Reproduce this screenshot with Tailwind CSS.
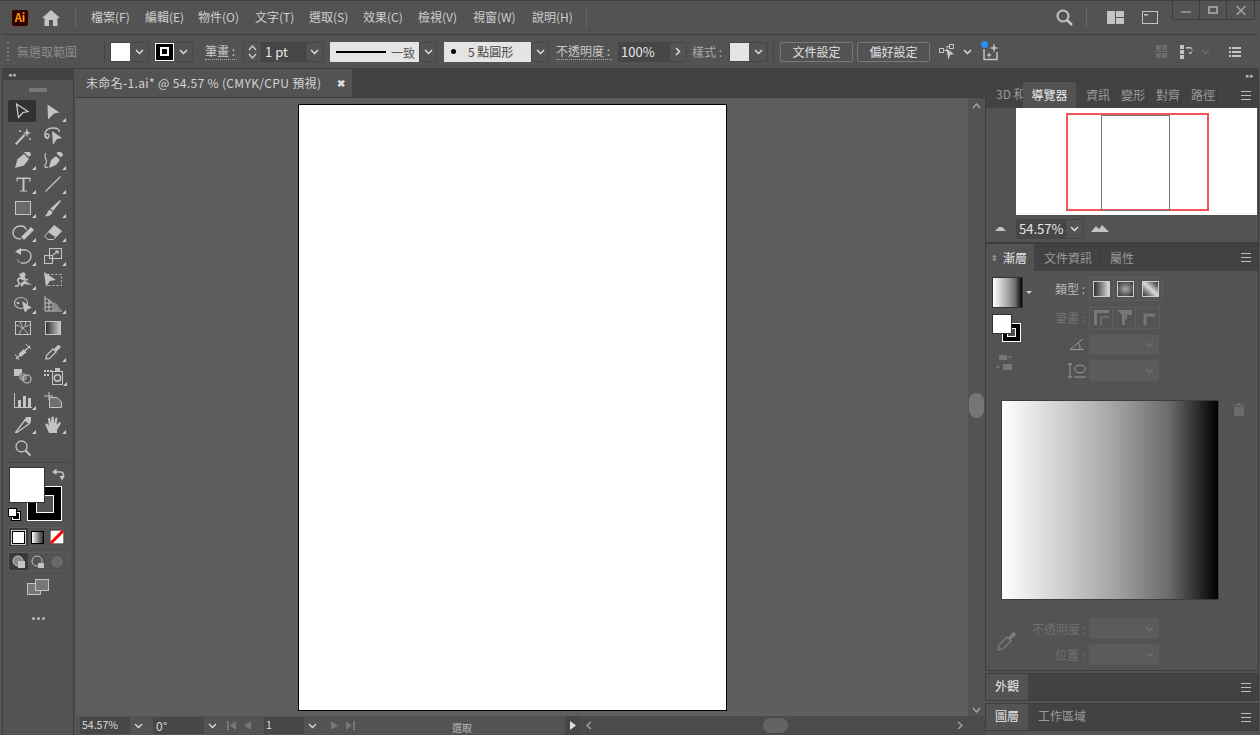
<!DOCTYPE html>
<html>
  <head>
    <meta charset="UTF-8" />
    <meta name="viewport" content="width=device-width, initial-scale=1.0" />
    <script src="https://cdn.jsdelivr.net/npm/@tailwindcss/browser@4"></script>
  </head>
  <body class="w-[1260px] h-[735px] overflow-hidden bg-[#535353] text-[12px] leading-none text-[#c8c8c8] font-['Noto_Sans_CJK_TC','Liberation_Sans',sans-serif]">
    <!-- title bar -->
    <div class="relative h-[34px] flex items-center border-t border-[#3f3f3f]">
      <div class="ml-[12px] w-[16px] h-[16px] rounded-[2px] bg-[#330000] text-[#ff9a00] text-[11px] font-bold flex items-center justify-center">Ai</div>
      <svg class="ml-[14px] w-[18px] h-[16px]" viewBox="0 0 18 16"><path fill="#c4c4c4" d="M9 0 L18 8 L15.5 8 L15.5 16 L11 16 L11 10 L7 10 L7 16 L2.500 16 L2.500 8 L0 8 Z"/></svg>
      <div class="ml-[15px] w-[1px] h-[20px] bg-[#666]"></div>
      <div class="ml-[15px] mb-[2px] flex items-center text-[#cfcfcf]">
        <span class="w-[54px]">檔案(F)</span>
        <span class="w-[53px]">編輯(E)</span>
        <span class="w-[57px]">物件(O)</span>
        <span class="w-[54px]">文字(T)</span>
        <span class="w-[54px]">選取(S)</span>
        <span class="w-[55px]">效果(C)</span>
        <span class="w-[55px]">檢視(V)</span>
        <span class="w-[59px]">視窗(W)</span>
        <span class="w-[54px]">說明(H)</span>
      </div>
      <div class="w-[1px] h-[20px] bg-[#666]"></div>
      <svg class="ml-[469px] w-[17px] h-[17px]" viewBox="0 0 17 17" fill="none" stroke="#c4c4c4" stroke-width="2"><circle cx="7" cy="7" r="5.500"/><path d="M11 11 L16 16" stroke-width="2.500"/></svg>
      <div class="ml-[13px] w-[1px] h-[20px] bg-[#666]"></div>
      <svg class="ml-[20px] w-[17px] h-[13px]" viewBox="0 0 17 13" fill="#c4c4c4"><rect width="8" height="13"/><rect x="9" width="8" height="6"/><rect x="9" y="7" width="8" height="6"/></svg>
      <svg class="ml-[18px] w-[16px] h-[13px]" viewBox="0 0 16 13" fill="none" stroke="#c4c4c4"><rect x="0.500" y="0.500" width="15" height="12"/><rect x="2" y="3" width="4" height="1.500" fill="#c4c4c4" stroke="none"/></svg>
      <!-- window buttons -->
      <div class="absolute left-[1172px] top-0 w-[83px] h-[19px] flex border border-t-0 border-[#3d3d3d] rounded-b-[2px]">
        <div class="w-[27px] flex items-center justify-center border-r border-[#3d3d3d]"><div class="w-[10px] h-[2px] mt-[3px] bg-[#8c8c8c]"></div></div>
        <div class="w-[27px] flex items-center justify-center border-r border-[#3d3d3d]"><div class="w-[10px] h-[8px] border-2 border-[#9a9a9a]"></div></div>
        <div class="flex-1 flex items-center justify-center">
          <svg class="w-[10px] h-[9px]" viewBox="0 0 10 9" stroke="#9a9a9a" stroke-width="1.800"><path d="M0.500 0 L9.500 9 M9.500 0 L0.500 9"/></svg>
        </div>
      </div>
    </div>

    <!-- control bar -->
    <div class="h-[35px] flex items-center border-y border-[#3d3d3d] ml-[2px] mr-[2px] text-[#c8c8c8]">
      <div class="ml-[5px] w-[2px] h-[19px] border-l-2 border-dotted border-[#777]"></div>
      <span class="ml-[8px] w-[87px] text-[#8b8b8b]">無選取範圍</span>
      <div class="w-[1px] h-[20px] bg-[#464646]"></div>
      <div class="ml-[5px] flex h-[20px] border border-[#464646] rounded-[2px]">
        <div class="w-[19px] bg-white"></div>
        <div class="w-[18px] flex items-center justify-center"><svg class="w-[9px] h-[6px]" viewBox="0 0 9 6" fill="none" stroke="#ddd" stroke-width="1.500"><path d="M1 1 L4.500 4.500 L8 1"/></svg></div>
      </div>
      <div class="ml-[5px] flex h-[20px] border border-[#464646] rounded-[2px]">
        <div class="w-[19px] bg-black border border-white flex items-center justify-center"><div class="w-[9px] h-[9px] border-2 border-white bg-black"></div></div>
        <div class="w-[18px] flex items-center justify-center"><svg class="w-[9px] h-[6px]" viewBox="0 0 9 6" fill="none" stroke="#ddd" stroke-width="1.500"><path d="M1 1 L4.500 4.500 L8 1"/></svg></div>
      </div>
      <span class="ml-[12px] w-[32px] h-[17px] pt-[2px] border-b border-dotted border-[#aaa] whitespace-nowrap">筆畫 :</span>
      <div class="ml-[6px] flex h-[20px] w-[81px] border border-[#464646] rounded-[2px]">
        <div class="w-[17px] flex flex-col items-center justify-center gap-[2px]">
          <svg class="w-[9px] h-[6px]" viewBox="0 0 9 6" fill="none" stroke="#ccc" stroke-width="1.300"><path d="M1 5 L4.500 1 L8 5"/></svg>
          <svg class="w-[9px] h-[6px]" viewBox="0 0 9 6" fill="none" stroke="#ccc" stroke-width="1.300"><path d="M1 1 L4.500 5 L8 1"/></svg>
        </div>
        <div class="w-[45px] bg-[#464646] border-x border-[#3f3f3f] pl-[3px] flex items-center text-[#e6e6e6] text-[13px]">1 pt</div>
        <div class="flex-1 flex items-center justify-center"><svg class="w-[9px] h-[6px]" viewBox="0 0 9 6" fill="none" stroke="#ddd" stroke-width="1.500"><path d="M1 1 L4.500 4.500 L8 1"/></svg></div>
      </div>
      <div class="ml-[6px] flex h-[20px]">
        <div class="w-[89px] bg-[#e4e4e4] flex items-center pl-[6px] text-[#555]">
          <div class="w-[50px] h-[2px] bg-black"></div><span class="ml-[5px] pt-[2px] whitespace-nowrap">一致</span>
        </div>
        <div class="w-[18px] border border-[#464646] rounded-r-[2px] flex items-center justify-center"><svg class="w-[9px] h-[6px]" viewBox="0 0 9 6" fill="none" stroke="#ddd" stroke-width="1.500"><path d="M1 1 L4.500 4.500 L8 1"/></svg></div>
      </div>
      <div class="ml-[7px] flex h-[20px]">
        <div class="w-[87px] bg-[#e4e4e4] flex items-center pl-[7px] text-[#333]">
          <div class="w-[5px] h-[5px] rounded-full bg-black"></div><span class="ml-[12px] text-[#444]">5 點圓形</span>
        </div>
        <div class="w-[18px] border border-[#464646] rounded-r-[2px] flex items-center justify-center"><svg class="w-[9px] h-[6px]" viewBox="0 0 9 6" fill="none" stroke="#ddd" stroke-width="1.500"><path d="M1 1 L4.500 4.500 L8 1"/></svg></div>
      </div>
      <span class="ml-[7px] w-[56px] h-[17px] pt-[2px] border-b border-dotted border-[#aaa] whitespace-nowrap">不透明度 :</span>
      <div class="ml-[6px] flex h-[20px] w-[69px] border border-[#464646] rounded-[2px]">
        <div class="w-[51px] bg-[#464646] pl-[2px] flex items-center text-[#e6e6e6] text-[13px]">100%</div>
        <div class="flex-1 flex items-center justify-center"><svg class="w-[6px] h-[9px]" viewBox="0 0 6 9" fill="none" stroke="#ddd" stroke-width="1.500"><path d="M1 1 L4.500 4.500 L1 8"/></svg></div>
      </div>
      <span class="ml-[5px] w-[37px] text-[#a8a8a8] whitespace-nowrap">樣式 :</span>
      <div class="flex h-[20px] border border-[#464646] rounded-[2px]">
        <div class="w-[19px] bg-[#e4e4e4]"></div>
        <div class="w-[18px] flex items-center justify-center"><svg class="w-[9px] h-[6px]" viewBox="0 0 9 6" fill="none" stroke="#ddd" stroke-width="1.500"><path d="M1 1 L4.500 4.500 L8 1"/></svg></div>
      </div>
      <div class="ml-[5px] w-[1px] h-[20px] bg-[#464646]"></div>
      <div class="ml-[6px] w-[73px] h-[20px] border border-[#777] rounded-[2px] flex items-center justify-center text-[#e0e0e0]">文件設定</div>
      <div class="ml-[4px] w-[73px] h-[20px] border border-[#777] rounded-[2px] flex items-center justify-center text-[#e0e0e0]">偏好設定</div>
      <svg class="ml-[9px] w-[17px] h-[18px]" viewBox="0 0 17 18" fill="none" stroke="#c4c4c4"><rect x="0.500" y="5.500" width="4" height="4"/><rect x="10.500" y="1.500" width="4" height="4"/><path d="M4.500 7.500 H8 M8 3.500 H10.500 M8 3.500 V5" /><path fill="#c4c4c4" stroke="none" d="M7 5 L15 11 L11 12 L9.500 17 Z"/></svg>
      <svg class="ml-[7px] w-[9px] h-[6px]" viewBox="0 0 9 6" fill="none" stroke="#ddd" stroke-width="1.500"><path d="M1 1 L4.500 4.500 L8 1"/></svg>
      <div class="relative ml-[10px] w-[17px] h-[19px]">
        <svg class="w-[17px] h-[19px]" viewBox="0 0 17 19" fill="none" stroke="#c4c4c4" stroke-width="1.500"><path d="M2 7 V17.500 H15 V10"/><path fill="#c4c4c4" stroke="none" d="M12 1 L13 5 L17 6 L13 7 L12 11 L11 7 L7 6 L11 5 Z M7 10 L7.700 12.300 L10 13 L7.700 13.700 L7 16 L6.300 13.700 L4 13 L6.300 12.300 Z"/></svg>
        <div class="absolute left-[-1px] top-[-1px] w-[7px] h-[7px] rounded-full bg-[#2c8df4]"></div>
      </div>
      <svg class="ml-[155px] w-[15px] h-[13px]" viewBox="0 0 15 13" fill="#6c6c6c"><rect x="2" y="0" width="5" height="5"/><rect x="8" y="0" width="5" height="5"/><rect x="2" y="8" width="5" height="5"/><rect x="8" y="8" width="5" height="5"/><rect x="0" y="6" width="15" height="1"/></svg>
      <svg class="ml-[11px] w-[15px] h-[14px]" viewBox="0 0 15 14" fill="#c4c4c4"><rect x="0" y="0" width="4" height="4"/><rect x="0" y="5" width="4" height="4"/><rect x="0" y="10" width="4" height="4"/><path d="M6 2 H11 A5 5 0 0 1 11 9 H9 V7.500 H11 A2.500 2.500 0 0 0 11 3.500 H6 Z"/></svg>
      <svg class="ml-[6px] w-[9px] h-[6px]" viewBox="0 0 9 6" fill="none" stroke="#6c6c6c" stroke-width="1.500"><path d="M1 1 L4.500 4.500 L8 1"/></svg>
      <svg class="ml-[19px] w-[12px] h-[10px]" viewBox="0 0 12 10" fill="#c4c4c4"><rect width="2" height="2"/><rect x="3" width="9" height="2"/><rect y="4" width="2" height="2"/><rect x="3" y="4" width="9" height="2"/><rect y="8" width="2" height="2"/><rect x="3" y="8" width="9" height="2"/></svg>
    </div>

    <div class="flex h-[666px]">
      <!-- tool panel -->
      <div class="w-[76px] shrink-0 px-[2px] flex flex-col">
        <div class="h-[11px] bg-[#424242] text-[#bbb] text-[7px] pl-[6px] flex items-center">◂◂</div>
        <div class="flex-1 bg-[#535353] border-x border-[#3d3d3d] flex flex-col">
          <div class="h-[20px] flex items-center justify-center"><div class="w-[18px] h-[4px] bg-[#777]"></div></div>
          <div class="ml-[5px] grid grid-cols-[30px_30px] auto-rows-[24px] text-[#c4c4c4]">
            <!-- selection -->
            <div class="flex items-center justify-center bg-[#323232] rounded-[2px] h-[22px] w-[28px]">
              <svg class="w-[14px] h-[16px]" viewBox="0 0 14 16" fill="none" stroke="#d4d4d4" stroke-width="1.200"><path d="M1.500 1 L13 8.500 L8 9.500 L3.500 14.500 Z"/></svg>
            </div>
            <div class="relative flex items-center justify-center">
              <svg class="w-[14px] h-[16px]" viewBox="0 0 14 16" fill="#c4c4c4"><path d="M1.500 0.500 L13.500 8.500 L8 9.500 L2 15.500 Z"/></svg>
              <div class="absolute right-[2px] bottom-[2px] w-0 h-0 border-2 border-l-transparent border-t-transparent border-r-[#ccc] border-b-[#ccc]"></div>
            </div>
            <!-- wand / lasso -->
            <div class="flex items-center justify-center">
              <svg class="w-[16px] h-[17px]" viewBox="0 0 16 17" fill="#c4c4c4"><path d="M0 15.500 L9 6 L10.500 7.500 L1.500 17 Z"/><path d="M11 4 L12 0 L13 4 L16 5 L13 6 L12 9 L11 6 L8 5 Z"/><circle cx="5" cy="3" r="1"/><circle cx="15" cy="11" r="1"/></svg>
            </div>
            <div class="relative flex items-center justify-center">
              <svg class="w-[20px] h-[18px]" viewBox="0 0 20 18" fill="none" stroke="#c4c4c4" stroke-width="1.300"><path d="M5 12 C-1 7 3 1 10 1 C15 1 17 3 16 5"/><circle cx="4" cy="9" r="2"/><path fill="#c4c4c4" stroke="none" d="M9 4 L19 11 L14 12 L10 18 Z"/></svg>
            </div>
            <!-- pen / curvature -->
            <div class="relative flex items-center justify-center">
              <svg class="w-[16px] h-[16px]" viewBox="0 0 16 16" fill="#c4c4c4"><path d="M0 16 L2.500 7 L9 2 L14 7 L9 13.500 Z"/><rect x="9" y="-1.500" width="7" height="4" transform="rotate(45 12 1)"/></svg>
              <div class="absolute right-[2px] bottom-[2px] w-0 h-0 border-2 border-l-transparent border-t-transparent border-r-[#ccc] border-b-[#ccc]"></div>
            </div>
            <div class="relative flex items-center justify-center">
              <svg class="w-[20px] h-[17px]" viewBox="0 0 20 17" fill="#c4c4c4"><path d="M6 16 L8 8 L13 4 L17 8 L13 13 Z"/><rect x="14" y="0" width="6" height="4" transform="rotate(45 17 2)"/><path fill="none" stroke="#c4c4c4" stroke-width="1.200" d="M3 1 C-1 6 7 8 2 13 C1 15 3 16 5 15"/></svg>
              <div class="absolute right-[2px] bottom-[2px] w-0 h-0 border-2 border-l-transparent border-t-transparent border-r-[#ccc] border-b-[#ccc]"></div>
            </div>
            <!-- type / line -->
            <div class="relative flex items-center justify-center">
              <svg class="w-[15px] h-[15px]" viewBox="0 0 15 15" fill="#c4c4c4"><path d="M0.500 0.500 H14.500 V4.500 H13.300 V2 H8.500 V13.500 H11 V14.500 H4 V13.500 H6.500 V2 H1.700 V4.500 H0.500 Z"/></svg>
              <div class="absolute right-[2px] bottom-[2px] w-0 h-0 border-2 border-l-transparent border-t-transparent border-r-[#ccc] border-b-[#ccc]"></div>
            </div>
            <div class="relative flex items-center justify-center">
              <svg class="w-[16px] h-[16px]" viewBox="0 0 16 16" stroke="#c4c4c4" stroke-width="1.200"><path d="M0.500 15.500 L15.500 0.500"/></svg>
              <div class="absolute right-[2px] bottom-[2px] w-0 h-0 border-2 border-l-transparent border-t-transparent border-r-[#ccc] border-b-[#ccc]"></div>
            </div>
            <!-- rect / brush -->
            <div class="relative flex items-center justify-center">
              <div class="w-[16px] h-[14px] border border-[#c4c4c4] bg-[#6a6a6a]"></div>
              <div class="absolute right-[2px] bottom-[2px] w-0 h-0 border-2 border-l-transparent border-t-transparent border-r-[#ccc] border-b-[#ccc]"></div>
            </div>
            <div class="relative flex items-center justify-center">
              <svg class="w-[16px] h-[17px]" viewBox="0 0 16 17" fill="#c4c4c4"><path d="M15 0 L16 1 L8 11 L5.500 8.500 Z"/><path d="M5 9.500 L7.500 12 C7 15 3 17 0 16 C2.500 14.500 2 11 5 9.500 Z"/></svg>
              <div class="absolute right-[2px] bottom-[2px] w-0 h-0 border-2 border-l-transparent border-t-transparent border-r-[#ccc] border-b-[#ccc]"></div>
            </div>
            <!-- shaper / eraser -->
            <div class="relative flex items-center justify-center">
              <svg class="w-[22px] h-[15px]" viewBox="0 0 22 15" fill="none" stroke="#c4c4c4" stroke-width="1.400"><path d="M9 14 C-3 14 0 1 8 1 C12 1 14 3 14 5"/><path d="M9 12 L19 2 L22 5 L12 15 Z" fill="#c4c4c4" stroke="none"/></svg>
              <div class="absolute right-[2px] bottom-[2px] w-0 h-0 border-2 border-l-transparent border-t-transparent border-r-[#ccc] border-b-[#ccc]"></div>
            </div>
            <div class="relative flex items-center justify-center">
              <svg class="w-[18px] h-[15px]" viewBox="0 0 18 15" stroke="#c4c4c4"><path fill="#c4c4c4" d="M10 0.500 L17.500 6 L12 12 L4.500 7 Z"/><path fill="#535353" d="M4.500 7 L12 12 L9.500 14.500 L4 14.500 L0.500 11.500 Z"/></svg>
              <div class="absolute right-[2px] bottom-[2px] w-0 h-0 border-2 border-l-transparent border-t-transparent border-r-[#ccc] border-b-[#ccc]"></div>
            </div>
            <!-- rotate / scale -->
            <div class="relative flex items-center justify-center">
              <svg class="w-[17px] h-[16px]" viewBox="0 0 17 16" fill="none" stroke="#c4c4c4" stroke-width="1.300"><path d="M4 3 C10 0 16 3 16 8 C16 13 11 16 7 15" /><path d="M7 15 C5 15 3 13 2 11" stroke-dasharray="1.500 1.500"/><path fill="#c4c4c4" stroke="none" d="M0 3.500 L6 0 L6 7 Z"/></svg>
              <div class="absolute right-[2px] bottom-[2px] w-0 h-0 border-2 border-l-transparent border-t-transparent border-r-[#ccc] border-b-[#ccc]"></div>
            </div>
            <div class="relative flex items-center justify-center">
              <svg class="w-[18px] h-[16px]" viewBox="0 0 18 16" fill="none" stroke="#c4c4c4" stroke-width="1.100"><rect x="0.500" y="7.500" width="8" height="8"/><rect x="5.500" y="0.500" width="12" height="10"/><path d="M9 7 L14 3 M11 3 H14 V6"/></svg>
              <div class="absolute right-[2px] bottom-[2px] w-0 h-0 border-2 border-l-transparent border-t-transparent border-r-[#ccc] border-b-[#ccc]"></div>
            </div>
            <!-- width / free transform -->
            <div class="relative flex items-center justify-center">
              <svg class="w-[19px] h-[16px]" viewBox="0 0 19 16" fill="none" stroke="#c4c4c4" stroke-width="1.500"><path d="M1 14 C5 15 6 11 4 9 C3 7 6 5 8 7 C10 9 12 5 8 3"/><path fill="#c4c4c4" stroke="none" d="M5 2 L10 0 L12 3 L9 5 L15 8 L11 9 L18 13 L10 12 L8 15 L6 12 L11 8 L7 6 Z"/></svg>
              <div class="absolute right-[2px] bottom-[2px] w-0 h-0 border-2 border-l-transparent border-t-transparent border-r-[#ccc] border-b-[#ccc]"></div>
            </div>
            <div class="relative flex items-center justify-center">
              <svg class="w-[19px] h-[16px]" viewBox="0 0 19 16" fill="none" stroke="#c4c4c4"><rect x="3.500" y="2.500" width="14" height="11" stroke-dasharray="2 2"/><path fill="#c4c4c4" stroke="none" d="M0 0 L12 8 L6 9 L2 15 Z"/></svg>
            </div>
            <!-- shape builder / perspective -->
            <div class="relative flex items-center justify-center">
              <svg class="w-[19px] h-[16px]" viewBox="0 0 19 16" fill="none" stroke="#c4c4c4" stroke-width="1.100"><ellipse cx="7" cy="7" rx="6.500" ry="5.500"/><path fill="#c4c4c4" stroke="none" d="M8 5 L18 12 L14 13 L11 17 Z"/><circle cx="4" cy="7" r="0.800" fill="#c4c4c4"/></svg>
              <div class="absolute right-[2px] bottom-[2px] w-0 h-0 border-2 border-l-transparent border-t-transparent border-r-[#ccc] border-b-[#ccc]"></div>
            </div>
            <div class="relative flex items-center justify-center">
              <svg class="w-[19px] h-[16px]" viewBox="0 0 19 16" fill="none" stroke="#c4c4c4"><path d="M1 0 V15 H18 M1 2 L9 7 L12 10 M1 7 H9 M1 11 H14 M5 3 V15 M9 7 V15"/><path fill="#8a8a8a" stroke="none" d="M8 7 L12 7 L17 14 H8 Z"/></svg>
              <div class="absolute right-[2px] bottom-[2px] w-0 h-0 border-2 border-l-transparent border-t-transparent border-r-[#ccc] border-b-[#ccc]"></div>
            </div>
            <!-- mesh / gradient -->
            <div class="flex items-center justify-center">
              <svg class="w-[16px] h-[14px]" viewBox="0 0 16 14" fill="none" stroke="#c4c4c4"><rect x="0.500" y="0.500" width="15" height="13"/><path stroke-width="0.900" d="M0 5 C5 3 6 8 8 7 C10 5 12 6 16 3 M8 7 C9 9 12 10 13 14 M8 7 C6 9 5 11 4 14 M5 0 C6 3 7 5 8 7 M11 0 L10 5"/></svg>
            </div>
            <div class="flex items-center justify-center">
              <div class="w-[16px] h-[14px] border border-[#c4c4c4] bg-linear-to-r from-[#333] to-[#ccc]"></div>
            </div>
            <!-- blend / eyedropper -->
            <div class="flex items-center justify-center">
              <svg class="w-[16px] h-[16px]" viewBox="0 0 16 16" fill="#c4c4c4" stroke="#c4c4c4"><path stroke-width="1.500" d="M1 15 L15 2"/><rect x="4" y="7" width="7" height="4" transform="rotate(-42 7.500 9)" stroke="none"/><path stroke-width="1" d="M0 10 L4 16 M11 0 L16 5"/></svg>
            </div>
            <div class="relative flex items-center justify-center">
              <svg class="w-[16px] h-[16px]" viewBox="0 0 16 16" fill="none" stroke="#c4c4c4" stroke-width="1.300"><path d="M1 15 L1.500 11.500 L8 5 L11 8 L4.500 14.500 Z"/><path fill="#c4c4c4" stroke="none" d="M7 3 L9 5 L13 1 A2 2 0 0 1 15.500 3.500 L11.500 7.500 L13.500 9.500 Z"/></svg>
              <div class="absolute right-[2px] bottom-[2px] w-0 h-0 border-2 border-l-transparent border-t-transparent border-r-[#ccc] border-b-[#ccc]"></div>
            </div>
            <!-- symbol sprayer -->
            <div class="flex items-center justify-center">
              <svg class="w-[18px] h-[15px]" viewBox="0 0 18 15" fill="none" stroke="#c4c4c4" stroke-width="1.100"><rect width="8" height="7" fill="#c4c4c4" stroke="none"/><circle cx="9" cy="8" r="4" fill="#8a8a8a" stroke="none"/><circle cx="13" cy="10" r="4"/></svg>
            </div>
            <div class="relative flex items-center justify-center">
              <svg class="w-[19px] h-[17px]" viewBox="0 0 19 17" fill="#c4c4c4"><rect x="0" y="2" width="2" height="2"/><rect x="3" y="2" width="2" height="2"/><rect x="6" y="2" width="2" height="2"/><rect x="0" y="6" width="2" height="2"/><rect x="3" y="6" width="2" height="2"/><rect x="11" y="0" width="5" height="3"/><rect x="8.500" y="3.500" width="10" height="13" fill="none" stroke="#c4c4c4"/><circle cx="13.500" cy="10" r="3.200" fill="none" stroke="#c4c4c4" stroke-width="1.500"/></svg>
              <div class="absolute right-[1px] bottom-[2px] w-0 h-0 border-2 border-l-transparent border-t-transparent border-r-[#ccc] border-b-[#ccc]"></div>
            </div>
            <!-- graph / artboard -->
            <div class="relative flex items-center justify-center">
              <svg class="w-[18px] h-[15px]" viewBox="0 0 18 15" fill="#c4c4c4"><rect x="0" y="0" width="1" height="15"/><rect x="0" y="14" width="18" height="1"/><rect x="4" y="7" width="3" height="7"/><rect x="9" y="3" width="3" height="11"/><rect x="14" y="5" width="3" height="9"/></svg>
              <div class="absolute right-[2px] bottom-[2px] w-0 h-0 border-2 border-l-transparent border-t-transparent border-r-[#ccc] border-b-[#ccc]"></div>
            </div>
            <div class="flex items-center justify-center">
              <svg class="w-[18px] h-[16px]" viewBox="0 0 18 16" fill="none" stroke="#c4c4c4"><path d="M5 0 V8 M0 4 H9"/><path fill="#707070" d="M5.500 5.500 H13 L17.500 10 V15.500 H5.500 Z"/></svg>
            </div>
            <!-- slice / hand -->
            <div class="relative flex items-center justify-center">
              <svg class="w-[17px] h-[17px]" viewBox="0 0 17 17" fill="none" stroke="#c4c4c4" stroke-width="1.300"><path d="M0.500 16.500 L10 4 L14.500 7.500 L2 16.500 Z"/><path fill="#c4c4c4" stroke="none" d="M11 1 L16 1 L16 6 L14 7.500 L9.500 4 Z"/></svg>
              <div class="absolute right-[2px] bottom-[2px] w-0 h-0 border-2 border-l-transparent border-t-transparent border-r-[#ccc] border-b-[#ccc]"></div>
            </div>
            <div class="relative flex items-center justify-center">
              <svg class="w-[17px] h-[17px]" viewBox="0 0 17 17" fill="#c4c4c4"><path d="M4 17 L0.500 9 C0 7.500 2 7 3 8.500 L4 10 L3 3 C3 1.500 5 1.500 5.300 3 L6 7.500 L6.500 1.500 C6.700 0 8.700 0 8.800 1.500 L9 7.500 L10.300 2.500 C10.700 1 12.500 1.500 12.300 3 L11.500 9 L14 6.500 C15 5.500 16.500 6.500 15.500 8 L12 14 V17 Z"/></svg>
              <div class="absolute right-[2px] bottom-[2px] w-0 h-0 border-2 border-l-transparent border-t-transparent border-r-[#ccc] border-b-[#ccc]"></div>
            </div>
            <!-- zoom -->
            <div class="flex items-center justify-center">
              <svg class="w-[16px] h-[16px]" viewBox="0 0 16 16" fill="none" stroke="#c4c4c4" stroke-width="1.300"><circle cx="6.500" cy="6.500" r="5.500"/><path d="M10.500 10.500 L15.500 15.500" stroke-width="2"/></svg>
            </div>
          </div>

          <div class="mt-[2px] mx-[3px] h-[1px] bg-[#464646]"></div>
          <!-- fill and stroke -->
          <div class="relative h-[64px] mx-[5px]">
            <div class="absolute left-[19px] top-[23px] w-[35px] h-[35px] bg-black border border-white flex items-center justify-center"><div class="w-[18px] h-[18px] bg-[#535353] border border-white"></div></div>
            <div class="absolute left-[1px] top-[4px] w-[36px] h-[36px] bg-white border border-[#333]"></div>
            <svg class="absolute left-[44px] top-[5px] w-[13px] h-[13px]" viewBox="0 0 13 13" fill="none" stroke="#c4c4c4" stroke-width="1.500"><path d="M2 4 H9 C11 4 12 6 11 8"/><path fill="#c4c4c4" stroke="none" d="M4.500 0.500 V7 L0 4 Z M7.500 8 H13 L10 12.500 Z"/></svg>
            <div class="absolute left-[4px] top-[49px] w-[8px] h-[8px] bg-black border border-white outline outline-black"></div>
            <div class="absolute left-0 top-[45px] w-[9px] h-[9px] bg-white border border-black"></div>
          </div>
          <!-- color modes -->
          <div class="mx-[5px] h-[20px] flex border border-[#5c5c5c] rounded-[1px]">
            <div class="w-[20px] bg-[#3a3a3a] flex items-center justify-center"><div class="w-[13px] h-[13px] bg-white border border-black outline outline-[#ccc]"></div></div>
            <div class="w-[20px] flex items-center justify-center"><div class="w-[13px] h-[13px] bg-linear-to-r from-white to-[#333] border border-black"></div></div>
            <div class="w-[20px] flex items-center justify-center">
              <svg class="w-[14px] h-[14px]" viewBox="0 0 14 14"><rect width="14" height="14" fill="white" stroke="#111"/><path d="M1 13 L13 1" stroke="#f00" stroke-width="3"/></svg>
            </div>
          </div>
          <!-- draw modes -->
          <div class="mt-[5px] mx-[5px] h-[19px] flex border border-[#5c5c5c] rounded-[1px]">
            <div class="w-[20px] bg-[#3a3a3a] flex items-center justify-center">
              <svg class="w-[14px] h-[14px]" viewBox="0 0 14 14"><circle cx="6" cy="6" r="5" fill="#8a8a8a" stroke="#c4c4c4"/><rect x="6" y="6" width="7" height="7" fill="#c4c4c4"/></svg>
            </div>
            <div class="w-[20px] flex items-center justify-center">
              <svg class="w-[14px] h-[14px]" viewBox="0 0 14 14"><circle cx="6" cy="6" r="5" fill="none" stroke="#c4c4c4"/><rect x="7" y="8" width="6" height="5" fill="#c4c4c4"/></svg>
            </div>
            <div class="w-[20px] flex items-center justify-center">
              <svg class="w-[12px] h-[12px]" viewBox="0 0 12 12"><circle cx="6" cy="6" r="5" fill="#666" stroke="#777"/></svg>
            </div>
          </div>
          <!-- screen mode -->
          <div class="mt-[8px] flex justify-center">
            <svg class="w-[22px] h-[16px]" viewBox="0 0 22 16" fill="#777" stroke="#c4c4c4"><rect x="0.500" y="4.500" width="13" height="11"/><rect x="8.500" y="0.500" width="13" height="11"/></svg>
          </div>
          <div class="mt-[22px] flex justify-center gap-[2px]">
            <div class="w-[3px] h-[3px] rounded-full bg-[#bbb]"></div><div class="w-[3px] h-[3px] rounded-full bg-[#bbb]"></div><div class="w-[3px] h-[3px] rounded-full bg-[#bbb]"></div>
          </div>
        </div>
      </div>

      <!-- document area -->
      <div class="flex-1 flex flex-col bg-[#424242]">
        <div class="h-[28px] shrink-0 flex">
          <div class="w-[276px] h-[28px] bg-[#535353] flex items-center text-[#d4d4d4]">
            <span class="ml-[10px] whitespace-nowrap tracking-[0.35px]">未命名-1.ai* @ 54.57 % (CMYK/CPU 預視)</span>
            <span class="ml-auto mr-[7px] text-[#ddd] font-bold text-[10px]">✖</span>
          </div>
        </div>
        <div class="flex-1 flex bg-[#5e5e5e] border-t border-[#3d3d3d]">
          <div class="flex-1 flex flex-col">
            <div class="flex-1 pl-[222px] pt-[6px]">
              <div class="w-[429px] h-[607px] bg-white border border-black"></div>
            </div>
          </div>
          <div class="w-[17px] bg-[#535353] flex flex-col items-center">
            <svg class="mt-[5px] w-[9px] h-[6px]" viewBox="0 0 9 6" fill="none" stroke="#aaa" stroke-width="1.200"><path d="M1 5 L4.500 1 L8 5"/></svg>
            <div class="mt-[284px] w-[15px] h-[25px] rounded-full bg-[#757575]"></div>
            <svg class="mt-[289px] w-[9px] h-[6px]" viewBox="0 0 9 6" fill="none" stroke="#aaa" stroke-width="1.200"><path d="M1 1 L4.500 5 L8 1"/></svg>
          </div>
        </div>
        <!-- status bar -->
        <div class="h-[19px] shrink-0 bg-[#535353] flex items-center text-[10.500px]">
          <div class="ml-[4px] w-[50px] h-[17px] bg-[#474747] flex items-center pl-[2px] text-[#ddd]">54.57%</div>
          <div class="w-[17px] flex justify-center"><svg class="w-[9px] h-[6px]" viewBox="0 0 9 6" fill="none" stroke="#ddd" stroke-width="1.300"><path d="M1 1 L4.500 4.500 L8 1"/></svg></div>
          <div class="ml-[6px] w-[51px] h-[17px] bg-[#474747] flex items-center pl-[3px] text-[#ddd] text-[12px]">0°</div>
          <div class="w-[17px] flex justify-center"><svg class="w-[9px] h-[6px]" viewBox="0 0 9 6" fill="none" stroke="#ddd" stroke-width="1.300"><path d="M1 1 L4.500 4.500 L8 1"/></svg></div>
          <div class="ml-[6px] w-[37px] flex items-center gap-[8px]">
            <svg class="w-[9px] h-[9px]" viewBox="0 0 9 9" fill="#777"><rect width="2" height="9"/><path d="M9 0 V9 L3 4.500 Z"/></svg>
            <svg class="w-[7px] h-[9px]" viewBox="0 0 7 9" fill="#777"><path d="M7 0 V9 L0 4.500 Z"/></svg>
          </div>
          <div class="w-[40px] h-[17px] bg-[#474747] flex items-center pl-[2px] text-[#ddd]">1</div>
          <div class="w-[17px] flex justify-center"><svg class="w-[9px] h-[6px]" viewBox="0 0 9 6" fill="none" stroke="#ddd" stroke-width="1.300"><path d="M1 1 L4.500 4.500 L8 1"/></svg></div>
          <div class="ml-[10px] w-[32px] flex items-center gap-[8px]">
            <svg class="w-[7px] h-[9px]" viewBox="0 0 7 9" fill="#777"><path d="M0 0 V9 L7 4.500 Z"/></svg>
            <svg class="w-[9px] h-[9px]" viewBox="0 0 9 9" fill="#777"><path d="M0 0 V9 L6 4.500 Z"/><rect x="7" width="2" height="9"/></svg>
          </div>
          <div class="ml-[4px] w-[198px] h-[19px] text-center text-[#b8b8b8] pt-[7px] pr-[8px] text-[10px]">選取</div>
          <div class="w-[15px] h-[19px] bg-[#474747] flex items-center justify-center">
            <svg class="w-[6px] h-[9px]" viewBox="0 0 6 9" fill="#ddd"><path d="M0 0 L6 4.500 L0 9 Z"/></svg>
          </div>
          <div class="flex-1 h-[19px] bg-[#4b4b4b] flex items-center pl-[6px]">
            <svg class="w-[6px] h-[9px]" viewBox="0 0 6 9" fill="none" stroke="#aaa" stroke-width="1.200"><path d="M5 1 L1 4.500 L5 8"/></svg>
            <div class="ml-[171px] w-[25px] h-[15px] rounded-full bg-[#636363]"></div>
            <svg class="ml-[169px] w-[6px] h-[9px]" viewBox="0 0 6 9" fill="none" stroke="#aaa" stroke-width="1.200"><path d="M1 1 L5 4.500 L1 8"/></svg>
          </div>
        </div>
      </div>

      <!-- right panels -->
      <div class="w-[275px] shrink-0 pr-[1px] flex flex-col">
        <div class="h-[12px] bg-[#424242] text-[#bbb] text-[7px] pr-[5px] flex items-center justify-end">▸▸</div>
        <!-- navigator -->
        <div class="h-[162px] bg-[#535353] border border-[#3d3d3d] flex flex-col">
          <div class="h-[26px] bg-[#424242] flex items-center text-[#9a9a9a]">
            <div class="w-[37px] pl-[10px] whitespace-nowrap overflow-hidden pt-[3px] h-[20px]">3D 和</div>
            <div class="w-[53px] h-full bg-[#535353] flex items-center justify-center text-[#e6e6e6]">導覽器</div>
            <div class="w-[36px] h-full border-r border-[#3d3d3d] flex items-center pl-[10px]">資訊</div>
            <div class="w-[35px] h-full border-r border-[#3d3d3d] flex items-center pl-[9px]">變形</div>
            <div class="w-[34px] h-full border-r border-[#3d3d3d] flex items-center pl-[9px]">對齊</div>
            <div class="w-[36px] h-[26px] border-r border-[#3d3d3d] overflow-hidden whitespace-nowrap pl-[10px] pt-[7px]">路徑管</div>
            <div class="ml-auto mr-[7px] w-[10px] h-[9px] border-y border-[#bbb] flex items-center"><div class="w-full h-[1px] bg-[#bbb]"></div></div>
          </div>
          <div class="ml-[30px] mr-[1px] h-[107px] bg-white flex justify-center pt-[5px]">
            <div class="ml-[1px] w-[143px] h-[98px] border-2 border-[#f25555] flex justify-center">
              <div class="ml-[-3px] w-[69px] h-[96px] border border-[#777]"></div>
            </div>
          </div>
          <div class="flex-1 flex items-center">
            <svg class="ml-[9px] w-[11px] h-[6px]" viewBox="0 0 11 6" fill="#c4c4c4"><path d="M0 5 H11 L7 1 H4 Z"/></svg>
            <div class="ml-[10px] flex h-[20px] border border-[#464646] rounded-[2px]">
              <div class="w-[49px] bg-[#464646] text-[#e6e6e6] flex items-center pl-[2px] text-[13px]">54.57%</div>
              <div class="w-[17px] flex items-center justify-center"><svg class="w-[9px] h-[6px]" viewBox="0 0 9 6" fill="none" stroke="#ddd" stroke-width="1.500"><path d="M1 1 L4.500 4.500 L8 1"/></svg></div>
            </div>
            <svg class="ml-[7px] w-[18px] h-[7px]" viewBox="0 0 18 7" fill="#c4c4c4"><path d="M0 7 L5 1 L8 4 L11 0 L18 7 Z"/></svg>
          </div>
        </div>
        <!-- gradient -->
        <div class="h-[428px] bg-[#535353] border border-[#3d3d3d] flex flex-col">
          <div class="h-[27px] bg-[#424242] flex items-center text-[#9a9a9a] shrink-0">
            <div class="w-[48px] h-full bg-[#535353] flex items-center text-[#e6e6e6]">
              <span class="ml-[5px] w-[5px] text-[8px] text-[#bbb]">⇕</span><span class="ml-[7px]">漸層</span>
            </div>
            <div class="w-[66px] h-full border-r border-[#3d3d3d] flex items-center pl-[10px]">文件資訊</div>
            <div class="w-[43px] h-full border-r border-[#3d3d3d] flex items-center pl-[10px]">屬性</div>
            <div class="ml-auto mr-[7px] w-[10px] h-[9px] border-y border-[#bbb] flex items-center"><div class="w-full h-[1px] bg-[#bbb]"></div></div>
          </div>
          <div class="flex h-[129px] shrink-0">
            <div class="w-[46px] pl-[6px] pt-[6px] shrink-0">
              <div class="flex items-center">
                <div class="w-[31px] h-[31px] border border-[#333] bg-[linear-gradient(90deg,#fff_0%,#a8a8a8_50%,#6c6c6c_77%,#000_100%)]"></div>
                <div class="ml-[3px] w-0 h-0 border-x-[3px] border-t-[3px] border-x-transparent border-t-[#ccc]"></div>
              </div>
              <div class="relative mt-[6px] h-[30px]">
                <div class="absolute left-[10px] top-[9px] w-[19px] h-[19px] bg-black border border-white flex items-center justify-center"><div class="w-[9px] h-[9px] border border-white bg-[#535353]"></div></div>
                <div class="absolute left-0 top-0 w-[20px] h-[20px] bg-white border border-[#333]"></div>
              </div>
              <svg class="ml-[4px] mt-[11px] w-[16px] h-[15px]" viewBox="0 0 16 15"><rect x="3" y="0" width="8" height="5" fill="#777"/><path d="M12 1 H16 L14 4 Z M0 13 L2 10 L4 13 Z" fill="#777"/><rect x="7" y="9" width="9" height="6" fill="#777"/></svg>
            </div>
            <div class="flex-1 pt-[6px]">
              <div class="flex items-center h-[24px]">
                <span class="ml-[23px] w-[34px] text-[#b8b8b8] whitespace-nowrap">類型 :</span>
                <div class="flex h-[24px] border border-[#5e5e5e]">
                  <div class="w-[24px] flex items-center justify-center border-r border-[#5e5e5e]"><div class="w-[17px] h-[16px] border border-[#ccc] bg-linear-to-r from-[#333] to-[#ddd]"></div></div>
                  <div class="w-[24px] flex items-center justify-center border-r border-[#5e5e5e]"><div class="w-[17px] h-[16px] border border-[#ccc] bg-radial from-[#aaa] to-[#333]"></div></div>
                  <div class="w-[24px] flex items-center justify-center"><div class="w-[17px] h-[16px] border border-[#ccc] bg-linear-to-tr from-[#333] via-[#ddd] to-[#333]"></div></div>
                </div>
              </div>
              <div class="mt-[5px] flex items-center h-[23px]">
                <span class="ml-[23px] w-[34px] text-[#707070] whitespace-nowrap">筆畫 :</span>
                <div class="flex h-[22px] border border-[#5e5e5e]">
                  <div class="w-[23px] flex items-center justify-center border-r border-[#5e5e5e]"><svg class="w-[15px] h-[15px]" viewBox="0 0 15 15" fill="none" stroke="#777" stroke-width="3"><path d="M1.500 15 V1.500 H15"/><path d="M7 15 V7 H15" stroke-width="1.500"/></svg></div>
                  <div class="w-[23px] flex items-center justify-center border-r border-[#5e5e5e]"><svg class="w-[15px] h-[15px]" viewBox="0 0 15 15" fill="#777"><path d="M0 0 H15 V5 H10 V10 L0 0 Z M8 15 V8 L5 5 V15 Z"/></svg></div>
                  <div class="w-[23px] flex items-center justify-center"><svg class="w-[15px] h-[15px]" viewBox="0 0 15 15" fill="none" stroke="#777" stroke-width="3"><path d="M5 15 V5 H15"/></svg></div>
                </div>
              </div>
              <div class="mt-[5px] flex items-center h-[21px]">
                <div class="w-[57px] pl-[37px] shrink-0"><svg class="w-[16px] h-[11px]" viewBox="0 0 16 11" fill="none" stroke="#999"><path d="M14 0 L1 10.500 H15 M9 4 A6 6 0 0 1 11 10"/></svg></div>
                <div class="w-[70px] h-[21px] bg-[#5b5b5b] rounded-[2px] flex items-center justify-end pr-[5px]"><svg class="w-[9px] h-[6px]" viewBox="0 0 9 6" fill="none" stroke="#6f6f6f" stroke-width="1.300"><path d="M1 1 L4.500 4.500 L8 1"/></svg></div>
              </div>
              <div class="mt-[5px] flex items-center h-[21px]">
                <div class="w-[57px] pl-[36px] shrink-0"><svg class="w-[18px] h-[15px]" viewBox="0 0 18 15" fill="none" stroke="#999"><path d="M2 0 V15 M0 2 L2 0 L4 2 M0 13 L2 15 L4 13"/><ellipse cx="12" cy="6" rx="5.500" ry="4"/><path d="M6 14 H18"/></svg></div>
                <div class="w-[70px] h-[21px] bg-[#5b5b5b] rounded-[2px] flex items-center justify-end pr-[5px]"><svg class="w-[9px] h-[6px]" viewBox="0 0 9 6" fill="none" stroke="#6f6f6f" stroke-width="1.300"><path d="M1 1 L4.500 4.500 L8 1"/></svg></div>
              </div>
            </div>
          </div>
          <div class="flex items-start shrink-0 pl-[15px]">
            <div class="w-[218px] h-[200px] border border-[#3d3d3d] bg-[linear-gradient(90deg,#fff_0%,#a8a8a8_50%,#6c6c6c_77%,#000_100%)]"></div>
            <svg class="ml-[14px] mt-[3px] w-[12px] h-[13px]" viewBox="0 0 12 13" fill="#6c6c6c"><path d="M0 2 H4 V0 H8 V2 H12 V3 H0 Z M1 4 H11 V13 H1 Z"/></svg>
          </div>
          <div class="flex items-center mt-[18px]">
            <svg class="ml-[11px] w-[19px] h-[19px]" viewBox="0 0 19 19" fill="none" stroke="#7c7c7c" stroke-width="1.300"><path d="M1 18 L2 13 L10 5 L14 9 L6 17 Z"/><path fill="#7c7c7c" stroke="none" d="M9 4 L11 6 L15 1 A2 2 0 0 1 18 4 L13 8 L15 10 Z"/></svg>
            <div class="ml-[15px]">
              <div class="flex items-center h-[21px]">
                <span class="w-[58px] pl-[1px] text-[#707070] whitespace-nowrap">不透明度 :</span>
                <div class="w-[70px] h-[21px] bg-[#5b5b5b] rounded-[2px] flex items-center justify-end pr-[5px]"><svg class="w-[9px] h-[6px]" viewBox="0 0 9 6" fill="none" stroke="#6f6f6f" stroke-width="1.300"><path d="M1 1 L4.500 4.500 L8 1"/></svg></div>
              </div>
              <div class="mt-[5px] flex items-center h-[21px]">
                <span class="w-[58px] pl-[24px] text-[#707070] whitespace-nowrap">位置 :</span>
                <div class="w-[70px] h-[21px] bg-[#5b5b5b] rounded-[2px] flex items-center justify-end pr-[5px]"><svg class="w-[9px] h-[6px]" viewBox="0 0 9 6" fill="none" stroke="#6f6f6f" stroke-width="1.300"><path d="M1 1 L4.500 4.500 L8 1"/></svg></div>
              </div>
            </div>
          </div>
        </div>
        <!-- appearance -->
        <div class="mt-[2px] h-[28px] border border-[#3d3d3d] bg-[#424242] flex items-center">
          <div class="w-[42px] h-full bg-[#535353] flex items-center justify-center pb-[2px] text-[#e6e6e6]">外觀</div>
          <div class="ml-auto mr-[7px] w-[10px] h-[9px] border-y border-[#bbb] flex items-center"><div class="w-full h-[1px] bg-[#bbb]"></div></div>
        </div>
        <!-- layers -->
        <div class="mt-[2px] h-[28px] border border-[#3d3d3d] bg-[#424242] flex items-center text-[#9a9a9a]">
          <div class="w-[42px] h-full bg-[#535353] flex items-center justify-center pb-[2px] text-[#e6e6e6]">圖層</div>
          <div class="w-[67px] h-full border-r border-[#3d3d3d] flex items-center pl-[10px] pb-[2px]">工作區域</div>
          <div class="ml-auto mr-[7px] w-[10px] h-[9px] border-y border-[#bbb] flex items-center"><div class="w-full h-[1px] bg-[#bbb]"></div></div>
        </div>
        <div class="flex-1"></div>
      </div>
    </div>
  </body>
</html>
